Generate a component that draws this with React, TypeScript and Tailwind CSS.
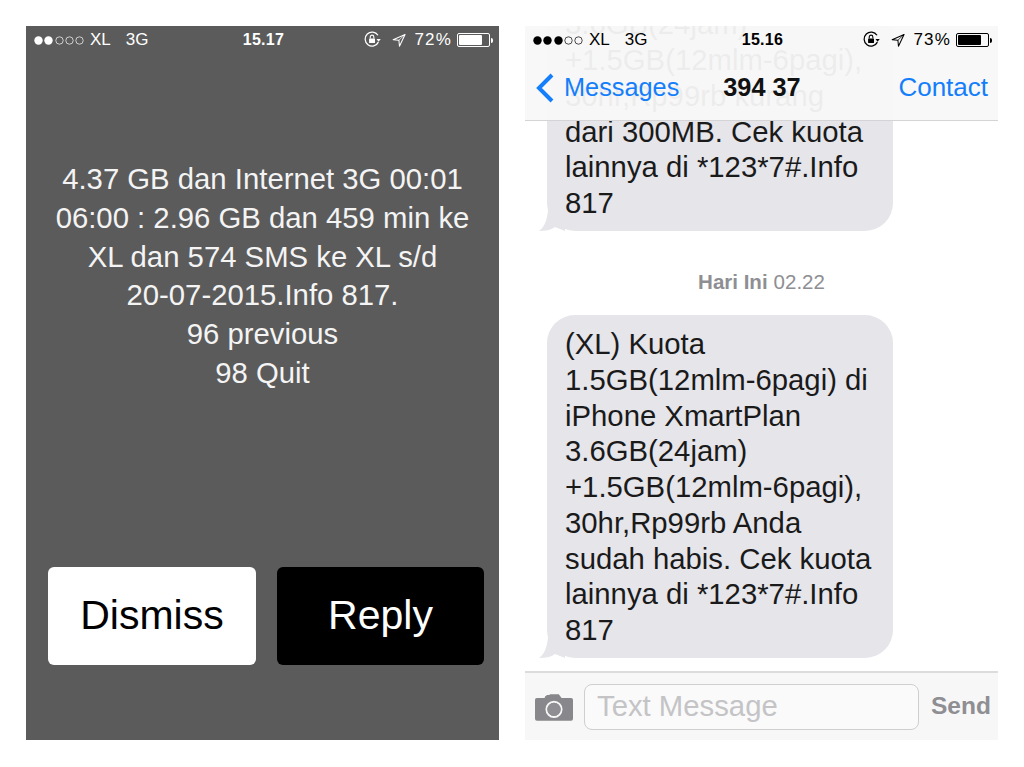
const font = "font-['Liberation_Sans',Arial,sans-serif]";

function Signal({ filled, color }: { filled: number; color: string }) {
	return (
		<span className="flex w-[50px] items-center justify-between">
			{[0, 1, 2, 3, 4].map((i) => (
				<svg key={i} width="9" height="9" viewBox="0 0 9 9">
					<circle
						cx="4.5"
						cy="4.5"
						r={i < filled ? 4.2 : 3.7}
						fill={i < filled ? color : "none"}
						stroke={color}
						strokeWidth={i < filled ? 0 : 0.7}
					/>
				</svg>
			))}
		</span>
	);
}

function RotationLock({ color }: { color: string }) {
	return (
		<svg width="18" height="18" viewBox="1 1 17 17" fill="none">
			<path d="M14.6 11.5A6.6 6.6 0 1 1 14.2 5" stroke={color} strokeWidth="1.2" />
			<path d="M12.8 8.6h4l-2 2.6z" fill={color} />
			<rect x="5.8" y="8" width="5.6" height="4.4" rx="0.6" fill={color} />
			<path d="M6.9 8V6.6a1.7 1.7 0 0 1 3.4 0V8" stroke={color} strokeWidth="1" />
		</svg>
	);
}

function LocationArrow({ color }: { color: string }) {
	return (
		<svg width="14" height="15" viewBox="0 0 15 15" fill="none">
			<path d="M14 1 1.2 6.600l6.200.6.6 6.400z" stroke={color} strokeWidth="1.1" strokeLinejoin="round" />
			<path d="M14 1 7.400 7.200" stroke={color} strokeWidth="0.8" />
		</svg>
	);
}

function Battery({ level, color }: { level: number; color: string }) {
	return (
		<span className="flex items-center">
			<span className="flex h-[14px] w-[33px] rounded-[2px] border border-current p-[1px]" style={{ color }}>
				<span className="h-full rounded-[1px]" style={{ width: `${level}%`, background: color }} />
			</span>
			<span className="ml-[1px] h-[5px] w-[2px] rounded-r-sm" style={{ background: color }} />
		</span>
	);
}

function StatusBar({
	filled,
	time,
	percent,
	level,
	color,
	textClass,
}: {
	filled: number;
	time: string;
	percent: string;
	level: number;
	color: string;
	textClass: string;
}) {
	return (
		<div className={`flex h-[28px] items-center pl-[8px] pr-[6px] text-[17px] ${textClass}`}>
			<div className="flex flex-1 items-center">
				<Signal filled={filled} color={color} />
				<span className="ml-[6px]">XL</span>
				<span className="ml-[15px]">3G</span>
			</div>
			<div className="w-[60px] text-center text-[16px] font-bold tracking-[0.3px]">{time}</div>
			<div className="flex flex-1 items-center justify-end">
				<RotationLock color={color} />
				<span className="ml-[10px]">
					<LocationArrow color={color} />
				</span>
				<span className="ml-[8px] mr-[5px] tracking-[1.2px]">{percent}</span>
				<Battery level={level} color={color} />
			</div>
		</div>
	);
}

function Bubble({ lines }: { lines: string[] }) {
	return (
		<div className="relative ml-[22px] w-[346px] rounded-[28px] bg-[#e5e5ea] pb-[10.250px] pl-[18px] pr-[10px] pt-[11px] text-[29.300px] leading-[35.750px] text-[#1a1a1a]">
			{lines.map((l) => (
				<div key={l} className="whitespace-nowrap">
					{l}
				</div>
			))}
			<svg className="absolute bottom-0 left-[-8px]" width="26" height="26" viewBox="0 0 26 26">
				<path d="M9 0C9.500 12 6 22 0 26c6 0 12-1 16-4L26 26V0z" fill="#e5e5ea" />
			</svg>
		</div>
	);
}

function AlertPanel() {
	return (
		<div className="flex h-[714px] w-[473px] shrink-0 flex-col bg-[#5b5b5b] text-white">
			<StatusBar filled={2} time="15.17" percent="72%" level={78} color="#ffffff" textClass="text-white" />
			<div className="mt-[106px] text-center text-[29.300px] leading-[38.800px] text-[#f4f4f4]">
				<div>4.37 GB dan Internet 3G 00:01</div>
				<div>06:00 : 2.96 GB dan 459 min ke</div>
				<div>XL dan 574 SMS ke XL s/d</div>
				<div>20-07-2015.Info 817.</div>
				<div>96 previous</div>
				<div>98 Quit</div>
			</div>
			<div className="mb-[75px] mt-auto flex gap-[21px] pl-[22px] text-[41px]">
				<button type="button" className="h-[98px] w-[208px] shrink-0 rounded-[6px] bg-white text-black">
					Dismiss
				</button>
				<button type="button" className="h-[98px] w-[207px] shrink-0 rounded-[6px] bg-black text-white">
					Reply
				</button>
			</div>
		</div>
	);
}

function ChatPanel() {
	return (
		<div className="relative flex h-[714px] w-[473px] shrink-0 flex-col bg-white">
			<div className="flex min-h-0 flex-1 flex-col justify-end overflow-hidden pb-[13px]">
				<div className="shrink-0">
					<Bubble
						lines={[
							"3.6GB(24jam)",
							"+1.5GB(12mlm-6pagi),",
							"30hr,Rp99rb kurang",
							"dari 300MB. Cek kuota",
							"lainnya di *123*7#.Info",
							"817",
						]}
					/>
				</div>
				<div className="flex h-[84px] shrink-0 items-center justify-center pt-[18px] text-[20.500px] text-[#8e8e93]">
					<span className="font-bold">Hari Ini</span>
					<span className="ml-[6px]">02.22</span>
				</div>
				<div className="shrink-0">
					<Bubble
						lines={[
							"(XL) Kuota",
							"1.5GB(12mlm-6pagi) di",
							"iPhone XmartPlan",
							"3.6GB(24jam)",
							"+1.5GB(12mlm-6pagi),",
							"30hr,Rp99rb Anda",
							"sudah habis. Cek kuota",
							"lainnya di *123*7#.Info",
							"817",
						]}
					/>
				</div>
			</div>

			{/* translucent nav over the scrolled messages */}
			<div className="absolute inset-x-0 top-0 h-[95px] border-b border-[#d4d4d6] bg-[#f8f8f8]/[0.95]">
				<StatusBar filled={3} time="15.16" percent="73%" level={78} color="#000000" textClass="text-black" />
				<div className="flex h-[67px] items-center text-[25.300px]">
					<svg className="ml-[11px]" width="18" height="30" viewBox="0 0 18 30" fill="none">
						<path d="M16 2 3 15l13 13" stroke="#147efb" strokeWidth="4" />
					</svg>
					<span className="ml-[10px] text-[#147efb]">Messages</span>
					<span className="ml-[44px] font-bold text-[#111111]">394 37</span>
					<span className="ml-auto mr-[10px] text-[26px] text-[#147efb]">Contact</span>
				</div>
			</div>

			<div className="flex h-[69px] shrink-0 items-center border-t-2 border-[#dcdcdc] bg-[#f7f7f7]">
				<svg className="ml-[10px] shrink-0" width="38" height="29" viewBox="0 0 40 30">
					<path
						fill="#88888c"
						fillRule="evenodd"
						d="M2 6h8l1-2h1V3h3l1-1h9l3 4h10a2 2 0 0 1 2 2v20a2 2 0 0 1-2 2H2a2 2 0 0 1-2-2V8a2 2 0 0 1 2-2zm18 3a9 9 0 1 0 0 18 9 9 0 0 0 0-18zm0 2a7 7 0 1 1 0 14 7 7 0 0 1 0-14z"
					/>
					<circle cx="20" cy="18" r="7" fill="#8f8f93" />
				</svg>
				<div className="ml-[11px] flex h-[46px] w-[335px] items-center rounded-[8px] border border-[#cfcfd2] bg-[#fafafa] pb-[2px] pl-[12px] text-[29.300px] text-[#c4c4c6]">
					Text Message
				</div>
				<span className="ml-[12px] text-[24.500px] font-bold text-[#8e8e93]">Send</span>
			</div>
		</div>
	);
}

export default function App() {
	return (
		<div className={`flex h-[767px] w-[1024px] gap-[26px] overflow-hidden bg-white pl-[26px] pt-[26px] ${font}`}>
			<AlertPanel />
			<ChatPanel />
		</div>
	);
}
